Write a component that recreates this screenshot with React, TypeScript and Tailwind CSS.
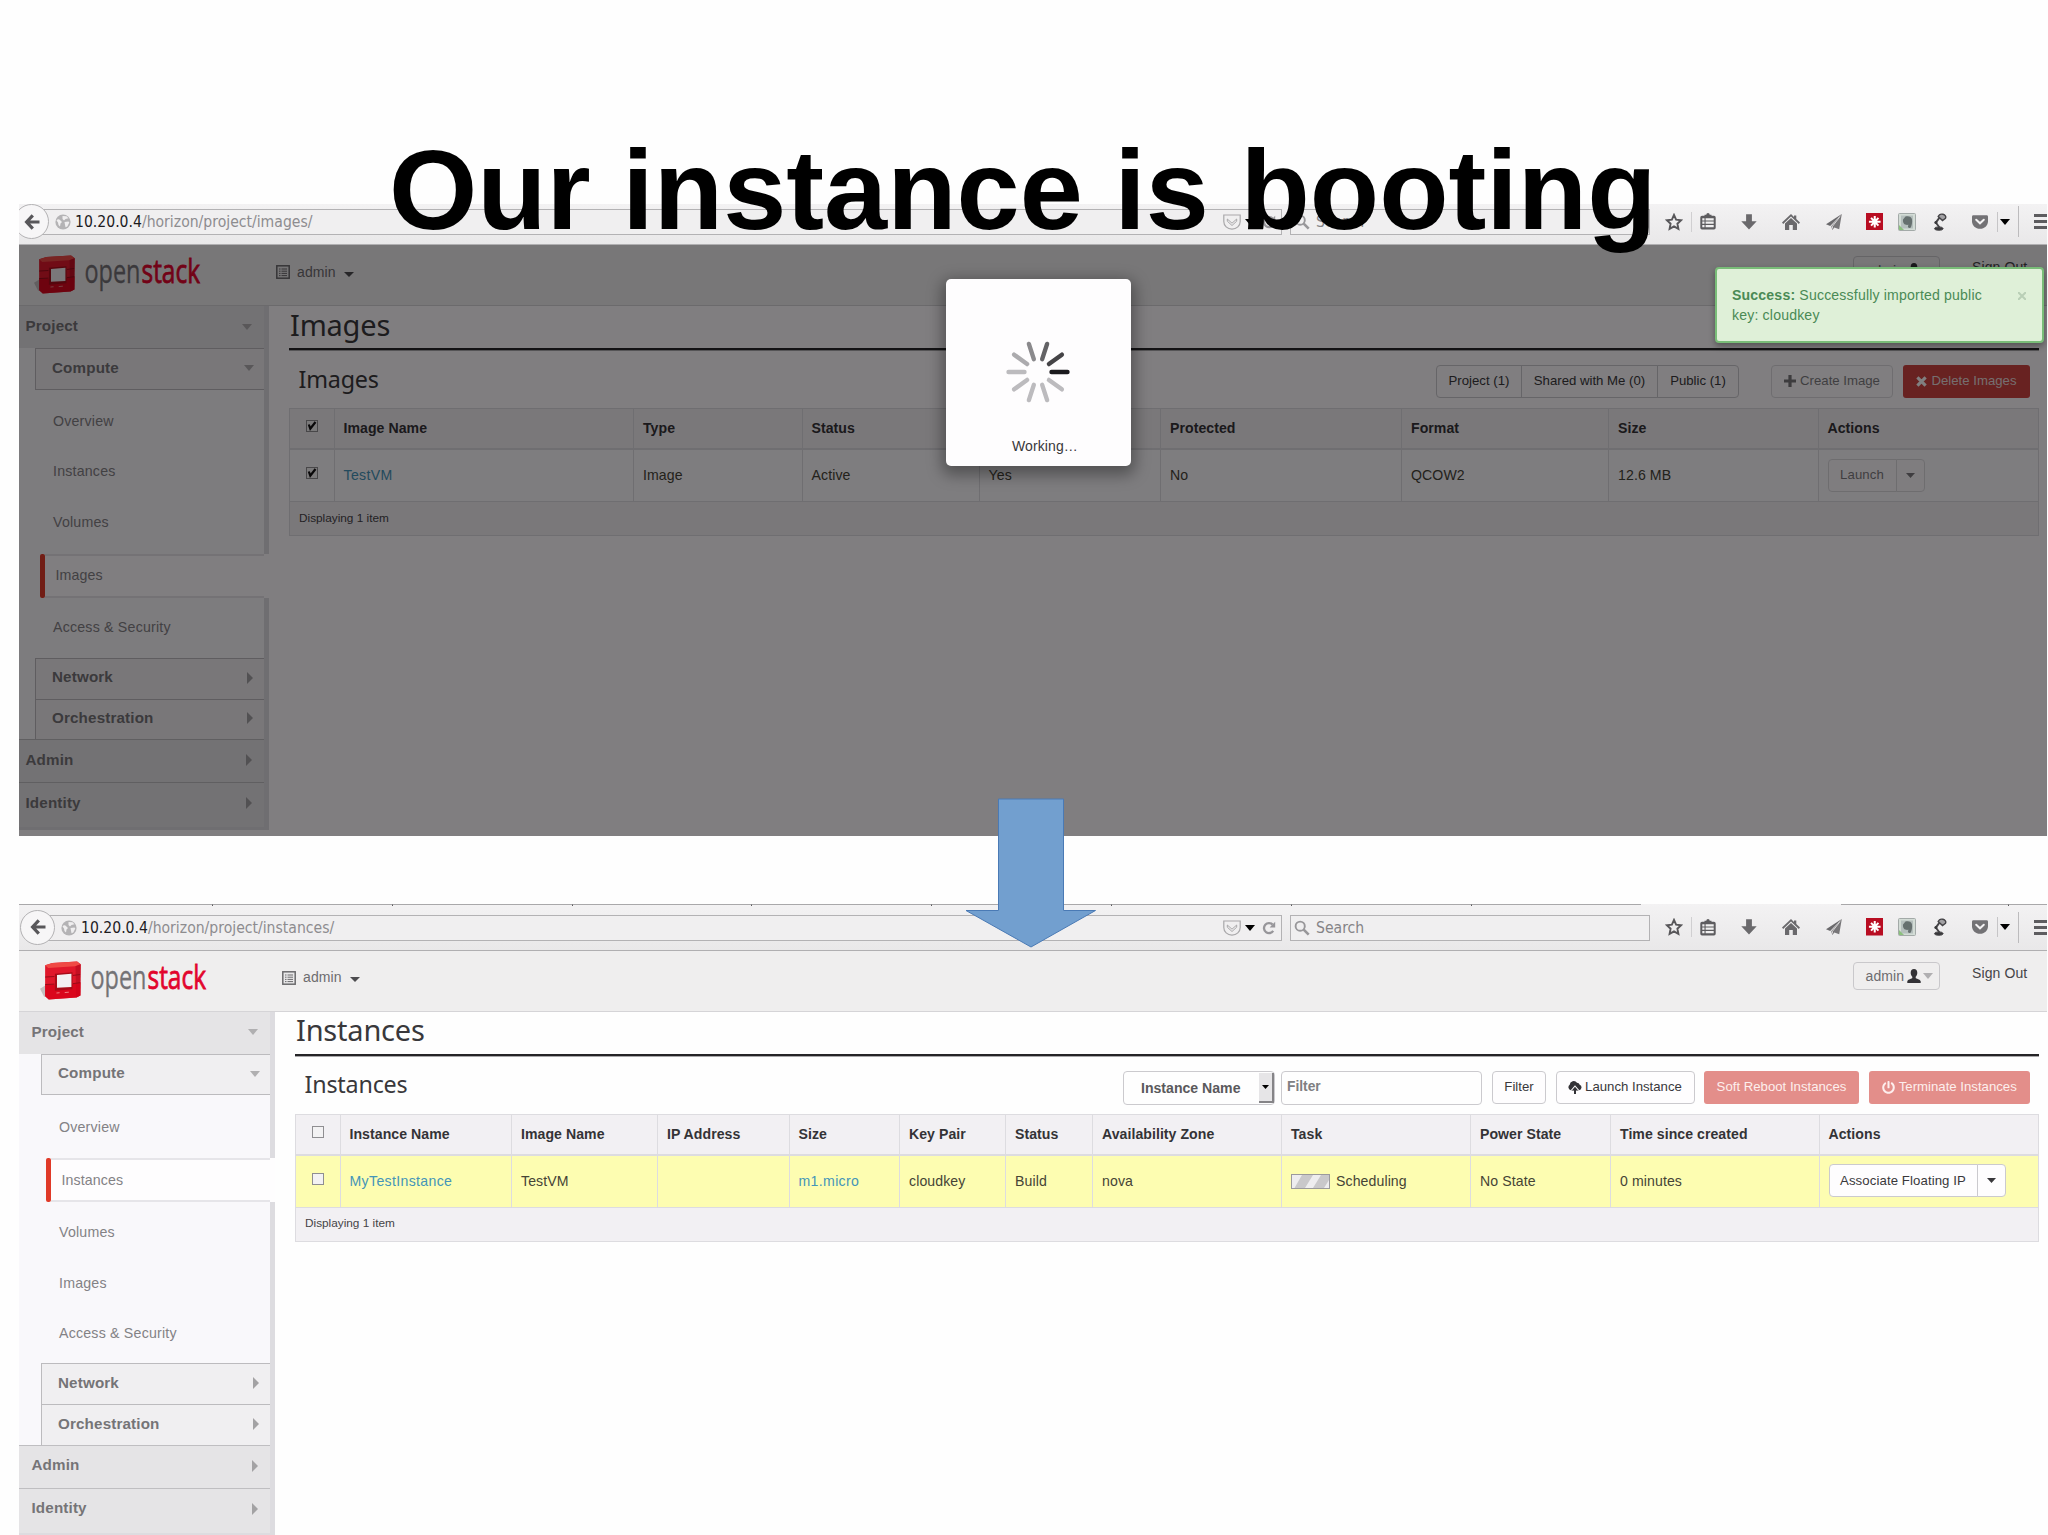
import React from "react";
import { FaPowerOff } from "react-icons/fa";

const Caret = ({ className = "" }: { className?: string }) => (
  <svg viewBox="0 0 10 6" className={`shrink-0 ${className}`} fill="currentColor" preserveAspectRatio="none">
    <path d="M0 0h10L5 6z" />
  </svg>
);

const RightCaret = () => (
  <svg viewBox="0 0 6 12" className="h-3 w-1.5 shrink-0 text-[#a3a2a4]" fill="currentColor">
    <path d="M0 0l6 6-6 6z" />
  </svg>
);

const Globe = () => (
  <svg viewBox="0 0 16 16" className="h-4 w-4 shrink-0">
    <circle cx="8" cy="8" r="7.6" fill="#b4b3b5" />
    <path d="M1.5 6.5C3 4.500 4 5 5.500 6.500L7 8 5.500 9.500 5 12.500 3.500 11 3 8.500z" fill="#f0eff0" />
    <path d="M7.500 2l4 .3 2 2-3 .7-1.500 1.500L7.500 5zM9.500 8l4-.5.8 1-2 4-1.800.800-.5-2.500z" fill="#efeeef" />
  </svg>
);

const PocketOutline = () => (
  <svg viewBox="0 0 18 16" className="h-4 w-[18px]" fill="none" stroke="#a9a8aa" strokeWidth="1.200">
    <path d="M.8 1h16.400v6.500c0 4.200-3.500 7.700-8.200 7.700S.8 11.700.8 7.500z" />
    <path d="M4.300 5L9 9.200 13.700 5v2.200L9 11.500 4.300 7.200z" strokeWidth="1" />
  </svg>
);

const Reload = () => (
  <svg viewBox="0 0 14 14" className="h-[14px] w-[14px]" fill="none">
    <path d="M11.200 9.800A5 5 0 1 1 10.600 3.600" stroke="#97969a" strokeWidth="2.300" />
    <path d="M13.200.8v5.600H7.600z" fill="#97969a" />
  </svg>
);

const Magnifier = () => (
  <svg viewBox="0 0 16 16" className="h-4 w-4" fill="none" stroke="#98979a">
    <circle cx="6.200" cy="6.200" r="4.600" strokeWidth="1.900" />
    <path d="M9.700 9.700l5 5" strokeWidth="2.600" />
  </svg>
);

const Star = () => (
  <svg viewBox="0 0 18 18" className="h-[18px] w-[18px]" fill="none" stroke="#58575a" strokeWidth="1.900">
    <path d="M9 1.900l2.100 4.700 5.100.6-3.800 3.500 1 5.100L9 13.300l-4.400 2.500 1-5.100L1.800 7.200l5.100-.6z" />
  </svg>
);

const Clipboard = () => (
  <svg viewBox="0 0 16 17" className="h-[17px] w-4">
    <path d="M4.500 3V1.800h1.800a1.700 1.700 0 0 1 3.400 0h1.800V3z" fill="#5d5c5f" />
    <path d="M2 2.800h12a1.700 1.700 0 0 1 1.700 1.700v10.300A1.700 1.700 0 0 1 14 16.500H2A1.700 1.700 0 0 1 .3 14.800V4.500A1.700 1.700 0 0 1 2 2.800z" fill="#5d5c5f" />
    <path d="M2.300 5.200h2.200v2.200H2.300zM5.600 5.200h8.100v2.200H5.600zM2.300 8.600h2.200v2.200H2.300zM5.600 8.600h8.100v2.200H5.600zM2.300 12h2.200v2.200H2.300zM5.600 12h8.100v2.200H5.600z" fill="#f0eff0" />
  </svg>
);

const Download = () => (
  <svg viewBox="0 0 16 16" className="h-4 w-4" fill="#6a696c">
    <path d="M5.100.3h5.800v7H15.700L8 15.500.3 7.300h4.800z" />
  </svg>
);

const HomeIcon = () => (
  <svg viewBox="0 0 18 16" className="h-4 w-[18px]" fill="#6a696c">
    <path d="M9 0l3 2.900V1.500h2.300V5L18 8.600l-1.200 1.300L9 2.500 1.200 9.900 0 8.600z" />
    <path d="M9 3.900l6 5.600V16h-4.200v-5H7.200v5H3V9.500z" />
  </svg>
);

const Plane = () => (
  <svg viewBox="0 0 16 16" className="h-4 w-4" fill="#6a696c">
    <path d="M15.800 0L0 10.300l4.200 1.600z" />
    <path d="M15.800 0L5.200 12.300 6.300 16l2.100-2.600 4.800 1.900z" fillOpacity=".9" />
    <path d="M14 2.600L6.500 12.300v2.200" stroke="#f0eff0" strokeWidth=".8" fill="none" />
  </svg>
);

const RedAsterisk = () => (
  <svg viewBox="0 0 18 18" className="h-[17.500px] w-[17.500px]">
    <rect width="18" height="18" fill="#b80d22" />
    <path d="M9 3.200v11.600M3 9h12M5.200 5l7.600 8M12.800 5l-7.600 8" stroke="#fff" strokeWidth="2.100" />
  </svg>
);

const Evernote = () => (
  <svg viewBox="0 0 18 18" className="h-[18px] w-[18px]">
    <rect x=".5" y=".5" width="17" height="17" rx="1" fill="#d3dcd6" stroke="#a3aaa8" />
    <rect x="3" y="2.500" width="12" height="13" fill="#b5bfbd" />
    <path d="M5 6.500L7.500 3.500c3-.8 6 .2 6.500 3 .4 3-.2 6.500-1.500 8.300-1.500.6-2.800-.2-2.500-1.800l.5-1.200C7 12.500 4.500 10.500 5 6.500z" fill="#66706f" />
    <path d="M1 12l5 5H1z" fill="#8cc07e" />
  </svg>
);

const Lamp = () => (
  <svg viewBox="0 0 14 18" className="h-[18px] w-[14px]" fill="none" stroke="#454447">
    <path d="M6.500 14.500L2.800 9.600 6.500 4.600" strokeWidth="1.900" />
    <path d="M5.200 3.600C6 1.600 8 .800 10 1.300c2.200.5 3.300 2.200 2.500 3.900L9.500 7.600z" fill="#a2a1a4" strokeWidth="1.400" />
    <ellipse cx="5.800" cy="15.600" rx="4.300" ry="1.700" fill="#39383b" />
    <circle cx="2.900" cy="9.500" r="1.500" fill="#39383b" stroke="none" />
  </svg>
);

const Pocket = () => (
  <svg viewBox="0 0 16 14" className="h-[14px] w-4">
    <path d="M1.300.3h13.400c.7 0 1.300.6 1.300 1.300v4.600c0 4.300-3.600 7.600-8 7.600S0 10.500 0 6.200V1.600C0 .9.600.3 1.300.3z" fill="#737275" />
    <path d="M4.200 4.700L8 8.300l3.800-3.600" fill="none" stroke="#f3f2f3" strokeWidth="2" strokeLinecap="round" />
  </svg>
);

const Logo = () => (
  <svg viewBox="0 0 170 44" className="h-11 w-[170px] overflow-visible">
    <g transform="translate(0 .6) scale(1.03 .94)">
      <path d="M0 30l6-4v12l-2 .5z" fill="#8d8484" opacity=".45" />
      <path d="M5 5l7-2.500L36 1l3.500 3-.5 33-3.500 2.300L8.500 41.500 5 38z" fill="#e0182b" />
      <path d="M5 5l7-2.500L36 1l3.500 3L34 6 8 8z" fill="#ef4a45" />
      <path d="M34.500 6L39.500 4 39 37l-4 2z" fill="#c40f22" />
      <path d="M5 26l30-1.500 4.500-1.500V37l-4 2.300L8.500 41.500 5 38z" fill="#d80018" opacity=".75" />
      <path d="M14.500 14l17-1.500v18l-17 1.500z" fill="#a80c18" />
      <path d="M16.500 15.200l14-1.200v14l-14 1z" fill="#f3f1f2" />
      <path d="M5 17.500l9-.6M32 15.800l7-1M5 25.500l9-.5M32 24.500l7-1" stroke="#8f0a16" strokeWidth=".9" />
      <path d="M16 34.500l3-.3M24 34l4-.4" stroke="#f5a09c" strokeWidth=".8" />
    </g>
    <text x="50.500" y="29" fontFamily="'Open Sans', sans-serif" fontSize="33.500" fill="#747376" stroke="#747376" strokeWidth=".3" textLength="56" lengthAdjust="spacingAndGlyphs">open</text>
    <text x="107.500" y="29" fontFamily="'Open Sans', sans-serif" fontSize="33.500" fill="#e2052c" stroke="#e2052c" strokeWidth=".8" textLength="58.500" lengthAdjust="spacingAndGlyphs">stack</text>
  </svg>
);

const ListIcon = () => (
  <svg viewBox="0 0 14 14" className="h-[14px] w-[14px]">
    <rect x=".8" y=".8" width="12.400" height="12.400" fill="#e9e8e9" stroke="#6b6a6d" strokeWidth="1.500" />
    <path d="M3 4h1.500M5.500 4H11M3 6.200h1.500M5.500 6.200H11M3 8.400h1.500M5.500 8.400H11M3 10.600h1.500M5.500 10.600H11" stroke="#6b6a6d" strokeWidth="1" />
  </svg>
);

const UserIcon = () => (
  <svg viewBox="0 0 14 14" className="h-[14px] w-[14px]" fill="#333236">
    <path d="M7 0c2.200 0 3.300 1.500 3.300 3.700 0 1.700-.7 3.200-1.600 4v1.200c0 .6 4.800 1.500 5 3.300V14H.3v-1.800c.2-1.800 5-2.700 5-3.300V7.700c-.9-.8-1.600-2.300-1.600-4C3.700 1.500 4.800 0 7 0z" />
  </svg>
);

const CloudUp = () => (
  <svg viewBox="0 0 14 13" className="h-[13px] w-[14px]">
    <path d="M3 9.200A3 3 0 0 1 1.700 3.800 4 4 0 0 1 9 1.800a3 3 0 0 1 2.700 2A2.800 2.800 0 0 1 11 9.200z" fill="#333236" />
    <path d="M7 4.300l4.300 5H2.700z" fill="#fefdfe" />
    <path d="M7 5.700l3.200 3.800H8V13H6V9.500H3.800z" fill="#333236" />
  </svg>
);

const Check = ({ checked }: { checked: boolean }) => (
  <span className="mb-[5px] flex h-3 w-3 items-center justify-center border border-[#8f8e91] bg-[#f3f2f3]">
    {checked && (
      <svg viewBox="0 0 10 10" className="h-2.5 w-2.5" fill="none" stroke="#111" strokeWidth="2.200">
        <path d="M1.800 3.500l1.500 4.200L8.500 1" />
      </svg>
    )}
  </span>
);

const Toolbar = ({ path, tabs }: { path: string; tabs: boolean }) => (
  <div className={`relative flex shrink-0 items-end border-b border-[#b0afb1] bg-gradient-to-b from-[#f3f2f3] to-[#e9e8e9] ${tabs ? "h-[46.5px]" : "h-[41px]"}`}>
    {tabs && (
      <div className="absolute inset-x-0 top-0 flex h-[2px]">
        {[194, 180, 179.5, 179.5, 179.5, 180, 180, 180].map((w, i) => (
          <div key={i} className="h-full border-t border-r border-t-[#a9a8aa] border-r-[#5d5c5f]" style={{ width: w }} />
        ))}
        <div className="h-full w-[169px] border-t border-[#a9a8aa]" />
        <div className="h-full w-[200px]" />
        <div className="h-full w-[168px] border-t border-r border-t-[#a9a8aa] border-r-[#5d5c5f]" />
        <div className="h-full flex-1 border-t border-[#a9a8aa]" />
      </div>
    )}
    <div className="relative z-10 mb-[5px] ml-[1px] flex h-[35px] w-[35px] shrink-0 items-center justify-center rounded-full border border-[#b3b2b4] bg-[#f7f6f7]">
      <svg viewBox="0 0 16 16" className="h-4 w-4" fill="none" stroke="#58575a" strokeWidth="3.200">
        <path d="M8.800 1.300L2.600 8l6.200 6.700M3 8h12.500" />
      </svg>
    </div>
    <div className="mb-[9px] -ml-4 flex h-[26px] flex-1 items-center border border-[#b3b2b4] bg-[#f0eff0] pl-[21px] pr-[5px]">
      <Globe />
      <span className="ml-1 flex-1 pt-[2px] font-['DejaVu_Sans_Condensed','DejaVu_Sans',sans-serif] text-[15.6px] leading-none font-normal whitespace-nowrap [font-stretch:condensed] text-[#8d8c8f]">
        <span className="text-[#1d1c1f]">10.20.0.4</span>{path}
      </span>
      <PocketOutline />
      <Caret className="mr-[7px] ml-1 h-[6px] w-[10px] text-black" />
      <Reload />
    </div>
    <div className="mb-[9px] ml-2 flex h-[26px] w-[360px] shrink-0 items-center border border-[#b3b2b4] bg-[#f0eff0] pl-[3px]">
      <Magnifier />
      <span className="ml-1.5 pt-[2px] font-['DejaVu_Sans_Condensed','DejaVu_Sans',sans-serif] text-[15.6px] leading-none [font-stretch:condensed] text-[#858487]">Search</span>
    </div>
    <div className="mb-[9px] flex h-[27px] w-[397px] shrink-0 items-center">
      <div className="ml-[6.500px] flex w-[34px] justify-center"><Star /></div>
      <div className="flex h-5 w-[34px] items-center justify-center border-l border-[#d0cfd1]"><Clipboard /></div>
      <div className="flex w-[49px] justify-center"><Download /></div>
      <div className="flex w-[34px] justify-center"><HomeIcon /></div>
      <div className="flex w-[52px] justify-center"><Plane /></div>
      <div className="flex w-[30px] justify-center"><RedAsterisk /></div>
      <div className="flex w-[34px] justify-center"><Evernote /></div>
      <div className="flex w-[32px] justify-center"><Lamp /></div>
      <div className="ml-2 flex w-[33px] justify-center"><Pocket /></div>
      <div className="flex h-5 w-[15px] items-center justify-center border-l border-[#c6c5c7]"><Caret className="h-[6px] w-[10px] text-black" /></div>
      <div className="ml-1.5 flex h-[31px] flex-1 flex-col items-end justify-center gap-[3px] border-l border-[#bcbbbd]">
        <div className="h-[3px] w-[13px] bg-[#5d5c5f]" />
        <div className="h-[3px] w-[13px] bg-[#5d5c5f]" />
        <div className="h-[3px] w-[13px] bg-[#5d5c5f]" />
      </div>
    </div>
  </div>
);

const Header = () => (
  <div className="flex h-[61px] shrink-0 items-start border-b border-[#d5d4d7] bg-[#efeeee]">
    <div className="mt-[9px] ml-[21px] w-[241.500px]">
      <Logo />
    </div>
    <div className="mt-[17px] flex h-[20px] items-center">
      <ListIcon />
      <span className="ml-[7.500px] text-[14px] tracking-[.1px] text-[#6d6c6f]">admin</span>
      <Caret className="mt-1 ml-[8px] h-[5px] w-[10px] text-[#4d4c4f]" />
    </div>
    <div className="flex-1" />
    <div className="mt-[11px] flex h-[28px] w-[87px] items-center rounded-[4px] border border-[#c9c8cb] pl-[11.5px]">
      <span className="mt-[2px] text-[14px] tracking-[.1px] text-[#6d6c6f]">admin</span>
      <span className="ml-[3px]"><UserIcon /></span>
      <Caret className="ml-[2px] h-[6px] w-[10px] text-[#b0afb1]" />
    </div>
    <span className="mt-[12px] ml-[32px] w-[75px] text-[14px] leading-5 tracking-[.1px] text-[#454447]">Sign Out</span>
  </div>
);

const SideHead = ({ label, open }: { label: string; open?: boolean }) => (
  <div className={`flex items-center justify-between bg-[#e5e4e6] pr-3 pl-[12.5px] text-[15.2px] font-bold tracking-[.15px] text-[#757477] ${open ? "h-[42px] pb-px" : "h-[43px] border-t border-[#bfbec1] pb-0.5"}`}>
    {label}
    {open ? <Caret className="h-[6px] w-[10px] text-[#b0afb1]" /> : <RightCaret />}
  </div>
);

const SubHead = ({ label, open }: { label: string; open?: boolean }) => (
  <div className={`ml-[22px] flex items-center justify-between border-t border-l border-[#bcbbbe] bg-[#f0eff1] pl-4 text-[15.2px] font-bold tracking-[.15px] text-[#757477] ${open ? "h-[41.5px] border-b pr-2.5 pb-px" : "h-[40.8px] pr-[11px] pb-0.5"}`}>
    {label}
    {open ? <Caret className="h-[6px] w-[10px] text-[#b0afb1]" /> : <RightCaret />}
  </div>
);

const Sidebar = ({ active }: { active: string }) => (
  <div className="w-[256px] shrink-0 self-start border-r-[5px] border-b-[3px] border-[#dddce0] bg-[#f9f8fb]">
    <SideHead label="Project" open />
    <SubHead label="Compute" open />
    <div className="pt-[7px] pb-[4.500px]">
      {["Overview", "Instances", "Volumes", "Images", "Access & Security"].map((item) =>
        item === active ? (
          <div key={item} className="relative mt-[6px] mb-[5.200px] -mr-[5px] ml-[27px] flex h-[44px] bg-[#fefdfe]">
            <div className="w-[4.5px] rounded-[2px] bg-[#e03a28]" />
            <div className="mr-[5px] flex flex-1 items-center border-y-2 border-[#e6e5e9] pl-[11px] text-[14.2px] tracking-[.1px] text-[#838285]">{item}</div>
          </div>
        ) : (
          <div key={item} className="flex h-[50.4px] items-center pl-[40px] text-[14.2px] tracking-[.2px] text-[#838285]">{item}</div>
        )
      )}
    </div>
    <SubHead label="Network" />
    <SubHead label="Orchestration" />
    <SideHead label="Admin" />
    <SideHead label="Identity" />
    <div className="h-0.5 bg-[#e5e4e6]" />
  </div>
);

const Btn = ({ children, className = "" }: { children: React.ReactNode; className?: string }) => (
  <div className={`flex h-[33px] shrink-0 items-center justify-center text-[13.2px] whitespace-nowrap ${className}`}>{children}</div>
);

const plain = "border border-[#cbcace] bg-[#fefdfe] text-[#39383b]";

const SplitButton = ({ label, muted }: { label: string; muted?: boolean }) => (
  <div className={`-mt-[2px] flex ${muted ? "opacity-65" : ""}`}>
    <Btn className={`rounded-l-[4px] ${plain} ${muted ? "w-[69px]" : "w-[149px]"}`}>{label}</Btn>
    <Btn className={`-ml-px w-[29px] rounded-r-[4px] ${plain}`}><Caret className="h-[5px] w-[9px]" /></Btn>
  </div>
);

type GridProps = { cols: string; heads: string[]; cells: React.ReactNode[]; checked: boolean; rowBg: string };

const DataGrid = ({ cols, heads, cells, checked, rowBg }: GridProps) => (
  <div className="border-r border-[#dddce0] text-[14.100px] whitespace-nowrap">
    <div className={`grid h-[42px] border-t border-b-2 border-[#dddce0] bg-[#f2f0f3] font-bold tracking-[.05px] text-[#343336] ${cols}`}>
      <div className="flex items-center border-l border-[#dddce0] pl-[15.500px]"><Check checked={checked} /></div>
      {heads.map((h) => (
        <div key={h} className="flex items-center border-l border-[#dddce0] pt-px pl-[9px]">{h}</div>
      ))}
    </div>
    <div className={`grid h-[52px] border-b border-[#dddce0] tracking-[.1px] text-[#454436] ${rowBg} ${cols}`}>
      <div className="flex items-center border-l border-[#dddce0] pl-[15.500px]"><Check checked={checked} /></div>
      {cells.map((c, i) => (
        <div key={i} className="flex items-center border-l border-[#dddce0] pt-px pl-[9px]">{c}</div>
      ))}
    </div>
    <div className="flex h-[34px] items-center border-b border-l border-[#dddce0] bg-[#f2f0f3] pl-[9px] text-[11.8px] text-[#454447]">Displaying 1 item</div>
  </div>
);

type PageProps = { title: string; actions: React.ReactNode; children: React.ReactNode };

const Page = ({ title, actions, children }: PageProps) => (
  <>
    <Header />
    <div className="flex">
      <Sidebar active={title} />
      <div className="mr-[8px] ml-[20px] flex-1 font-['Liberation_Sans',sans-serif]">
        <div className="h-[44px] border-b-2 border-[#252427] shadow-[0_1px_0_#a9a8aa]">
          <div className="flex h-[37px] items-center pl-px font-['Noto_Sans',sans-serif] text-[29px] tracking-[-.2px] text-[#39383b]">{title}</div>
        </div>
        <div className="flex h-[58px] items-start pt-[15px] pr-[9px]">
          <div className="flex h-[28px] flex-1 items-center pl-[9.500px] font-['Noto_Sans',sans-serif] text-[23.3px] tracking-[-.2px] text-[#39383b]">{title}</div>
          {actions}
        </div>
        {children}
      </div>
    </div>
  </>
);

const spokes = ["#1b1a1d", "#bcbbbe", "#bcbbbe", "#bcbbbe", "#bcbbbe", "#bcbbbe", "#acabae", "#8a898c", "#636265", "#454447"];

const link = "text-[#4595b8] tracking-[.35px]";

export default function App() {
  return (
    <div className="relative flex h-[1535px] w-[2048px] flex-col overflow-hidden bg-[#fefefe] pt-[204px] pl-[19px] font-['Liberation_Sans',sans-serif]">
      <div className="relative h-[632px] w-[2028px] shrink-0 overflow-hidden">
        <div className="-ml-[6px] flex h-full w-[2034px] flex-col bg-[#fefdfe]">
          <Toolbar path="/horizon/project/images/" tabs={false} />
          <div className="relative flex-1 overflow-hidden">
            <Page
              title="Images"
              actions={
                <>
                  <Btn className={`w-[86px] rounded-l-[4px] pb-px ${plain}`}>Project (1)</Btn>
                  <Btn className={`-ml-px w-[137px] pb-px ${plain}`}>Shared with Me (0)</Btn>
                  <Btn className={`-ml-px w-[82px] rounded-r-[4px] pb-px ${plain}`}>Public (1)</Btn>
                  <Btn className={`ml-[32px] w-[122px] gap-1 rounded-[4px] pb-px opacity-65 ${plain}`}>
                    <svg viewBox="0 0 12 12" className="h-3 w-3" stroke="#333236" strokeWidth="3.200"><path d="M6 0v12M0 6h12" /></svg>
                    Create Image
                  </Btn>
                  <Btn className="ml-[10px] w-[127px] gap-1 rounded-[3px] bg-[#cf4540] pb-px text-[#e9dede]">
                    <svg viewBox="0 0 12 12" className="h-[11px] w-[11px]" stroke="#fff" strokeWidth="3.400"><path d="M1.500 1.500l9 9M10.500 1.500l-9 9" /></svg>
                    Delete Images
                  </Btn>
                </>
              }
            >
              <DataGrid
                cols="grid-cols-[44.500px_299.5px_168.5px_177px_181.5px_241px_207px_209.5px_1fr]"
                heads={["Image Name", "Type", "Status", "Public", "Protected", "Format", "Size", "Actions"]}
                cells={[<span className={link}>TestVM</span>, "Image", "Active", "Yes", "No", "QCOW2", "12.6 MB", <SplitButton label="Launch" muted />]}
                checked
                rowBg="bg-[#fbfafc]"
              />
            </Page>
            <div className="absolute inset-0 bg-[#020002]/50" />
          </div>
        </div>
      </div>

      <div className="mt-[68px] flex h-[631px] w-[2028px] shrink-0 flex-col overflow-hidden">
        <Toolbar path="/horizon/project/instances/" tabs />
        <div className="flex-1">
          <Page
            title="Instances"
            actions={
              <>
                <div className="flex h-[34.500px] w-[152px] justify-between rounded-[4px] border border-[#cbcace] pl-[17px] text-[14.1px] font-bold text-[#5a595c]">
                  <span className="flex items-center pt-px">Instance Name</span>
                  <span className="my-px flex w-[15px] items-center justify-center border-r-2 border-b-2 border-[#858487] bg-[#e6e5e7]"><Caret className="h-1 w-[7px] text-black" /></span>
                </div>
                <div className="ml-[6px] flex h-[34.500px] w-[201px] items-center rounded-[4px] border border-[#cbcace] pl-[5px] text-[13.8px] font-bold text-[#807f82]">Filter</div>
                <Btn className={`ml-[10px] w-[54px] rounded-[4px] ${plain}`}>Filter</Btn>
                <Btn className={`ml-[9.500px] w-[139px] gap-[3px] rounded-[4px] ${plain}`}><CloudUp />Launch Instance</Btn>
                <Btn className="ml-[9.500px] w-[155px] rounded-[3px] bg-[#e38e8a] text-[#fdeeed]">Soft Reboot Instances</Btn>
                <Btn className="ml-[9.500px] w-[161.500px] gap-1 rounded-[3px] bg-[#e38e8a] text-[#fdeeed]"><FaPowerOff size={13} />Terminate Instances</Btn>
              </>
            }
          >
            <DataGrid
              cols="grid-cols-[44.5px_171.5px_146px_131.5px_110.5px_106px_87px_189px_189px_140px_208.5px_1fr]"
              heads={["Instance Name", "Image Name", "IP Address", "Size", "Key Pair", "Status", "Availability Zone", "Task", "Power State", "Time since created", "Actions"]}
              cells={[
                <span className={link}>MyTestInstance</span>,
                "TestVM",
                "",
                <span className={link}>m1.micro</span>,
                "cloudkey",
                "Build",
                "nova",
                <>
                  <svg viewBox="0 0 39 15" className="mr-[6px] h-[15px] w-[39px]">
                    <rect x=".5" y=".5" width="38" height="14" fill="#c9c8ca" stroke="#9b9a9d" />
                    <path d="M1 14V1h10L3.500 14zM14 14L22 1h8l-8 13zM33 14l5-8v8z" fill="#eeedef" />
                  </svg>
                  Scheduling
                </>,
                "No State",
                "0 minutes",
                <SplitButton label="Associate Floating IP" />,
              ]}
              checked={false}
              rowBg="bg-[#fdfdb1]"
            />
          </Page>
        </div>
      </div>

      <div className="absolute top-[279px] left-[946px] flex h-[187px] w-[185px] flex-col items-center rounded-[5px] bg-[#fefdfe] shadow-[0_5px_15px_4px_rgba(0,0,0,.35)]">
        <svg viewBox="-33 -33 66 66" className="mt-[60px] mr-px h-[66px] w-[66px]">
          {spokes.map((c, i) => (
            <path key={i} d="M13.500 0H29.500" stroke={c} strokeWidth="4.400" strokeLinecap="round" transform={`rotate(${i * 36})`} />
          ))}
        </svg>
        <span className="mt-[30.500px] ml-[13px] text-[14px] tracking-[.1px] text-[#39383b]">Working…</span>
      </div>

      <div className="absolute top-[267px] left-[1715px] flex h-[76px] w-[329px] justify-between rounded-[4px] border-2 border-[#79bd78] bg-[#dff0d8] pt-[14px] pr-[16px] pl-[15px] text-[14.100px] leading-5 tracking-[.17px] text-[#4a8a55] shadow-[0_3px_6px_rgba(0,0,0,.35)]">
        <div className="w-[265px] pt-[2px]">
          <b>Success:</b> Successfully imported public key: cloudkey
        </div>
        <svg viewBox="0 0 8 8" className="mt-[9px] h-2 w-2" stroke="#b9cfb6" strokeWidth="2"><path d="M0 0l8 8M8 0L0 8" /></svg>
      </div>

      <svg viewBox="0 0 132 150" className="absolute top-[798px] left-[965px] h-[150px] w-[132px]">
        <path d="M33.500 1h65v111.500h32L66 149 1 112.500h32.500z" fill="#729fcf" stroke="#4a7ab5" strokeWidth="1" />
      </svg>

      <h1 className="absolute top-[124.500px] left-[389px] text-[113.5px] leading-[130px] font-bold whitespace-nowrap text-black">Our instance is booting</h1>
    </div>
  );
}
